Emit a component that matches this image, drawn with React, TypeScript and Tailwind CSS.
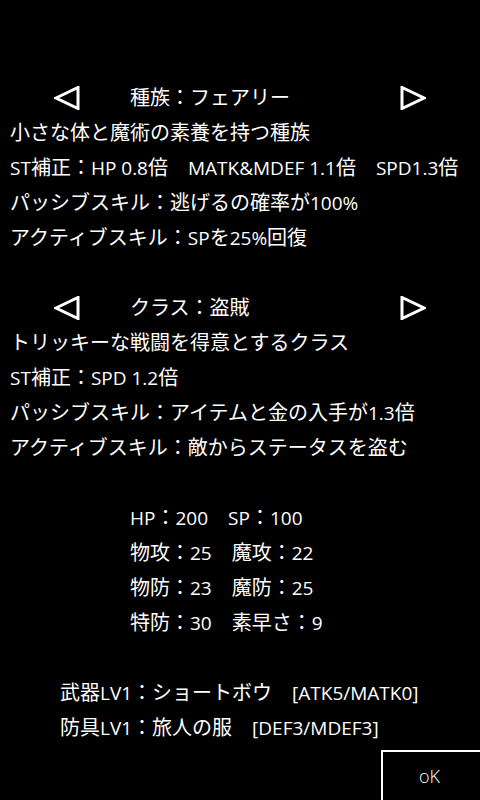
const race = {
  name: "種族：フェアリー",
  lines: [
    "小さな体と魔術の素養を持つ種族",
    "ST補正：HP 0.8倍　MATK&MDEF 1.1倍　SPD1.3倍",
    "パッシブスキル：逃げるの確率が100%",
    "アクティブスキル：SPを25%回復",
  ],
};

const job = {
  name: "クラス：盗賊",
  lines: [
    "トリッキーな戦闘を得意とするクラス",
    "ST補正：SPD 1.2倍",
    "パッシブスキル：アイテムと金の入手が1.3倍",
    "アクティブスキル：敵からステータスを盗む",
  ],
};

const stats = [
  "HP：200　SP：100",
  "物攻：25　魔攻：22",
  "物防：23　魔防：25",
  "特防：30　素早さ：9",
];

const gear = [
  "武器LV1：ショートボウ　[ATK5/MATK0]",
  "防具LV1：旅人の服　[DEF3/MDEF3]",
];

// latin runs sit a size smaller than the kana/kanji around them
function Txt({ text }: { text: string }) {
  const parts = text.split(/([\x20-\x7e]+)/).filter(Boolean);
  return (
    <>
      {parts.map((p, i) =>
        /^[\x20-\x7e]+$/.test(p) ? (
          <span key={i} className="text-[19px]">
            {p}
          </span>
        ) : (
          <span key={i}>{p}</span>
        )
      )}
    </>
  );
}

function Arrow({ dir }: { dir: "left" | "right" }) {
  const pts = dir === "left" ? "2,12 24,1.5 24,22.5" : "2,1.5 2,22.5 24,12";
  return (
    <svg width="26" height="24" viewBox="0 0 26 24" className="shrink-0">
      <polygon points={pts} fill="none" stroke="white" strokeWidth="3" strokeLinejoin="miter" />
    </svg>
  );
}

function Selector({ name }: { name: string }) {
  return (
    <div className="flex h-[35px] items-center">
      <div className="ml-[54px]">
        <Arrow dir="left" />
      </div>
      <div className="ml-[50px] w-[270px]">{name}</div>
      <Arrow dir="right" />
    </div>
  );
}

function Row({ text, pad }: { text: string; pad: string }) {
  return (
    <div className={`h-[35px] whitespace-pre ${pad}`}>
      <Txt text={text} />
    </div>
  );
}

function Section({ data }: { data: { name: string; lines: string[] } }) {
  return (
    <div>
      <Selector name={data.name} />
      {data.lines.map((l) => (
        <Row key={l} text={l} pad="pl-[10px]" />
      ))}
    </div>
  );
}

export default function App() {
  return (
    <div
      className="flex h-[800px] w-[480px] flex-col overflow-hidden bg-black pt-[80px] text-[20px] leading-[35px] text-white"
      style={{ fontFamily: '"Open Sans", "Noto Sans CJK JP", sans-serif' }}
    >
      <Section data={race} />
      <div className="h-[35px]" />
      <Section data={job} />
      <div className="h-[35px]" />
      <div>
        {stats.map((s) => (
          <Row key={s} text={s} pad="pl-[130px]" />
        ))}
      </div>
      <div className="h-[35px]" />
      <div>
        {gear.map((g) => (
          <Row key={g} text={g} pad="pl-[60px]" />
        ))}
      </div>
      <div className="mt-[5px] flex justify-end">
        <button className="flex h-[50px] w-[99px] items-center justify-center border-l-2 border-t-2 border-white pr-[4px] text-[18px] font-light leading-none text-white">
          oK
        </button>
      </div>
    </div>
  );
}
